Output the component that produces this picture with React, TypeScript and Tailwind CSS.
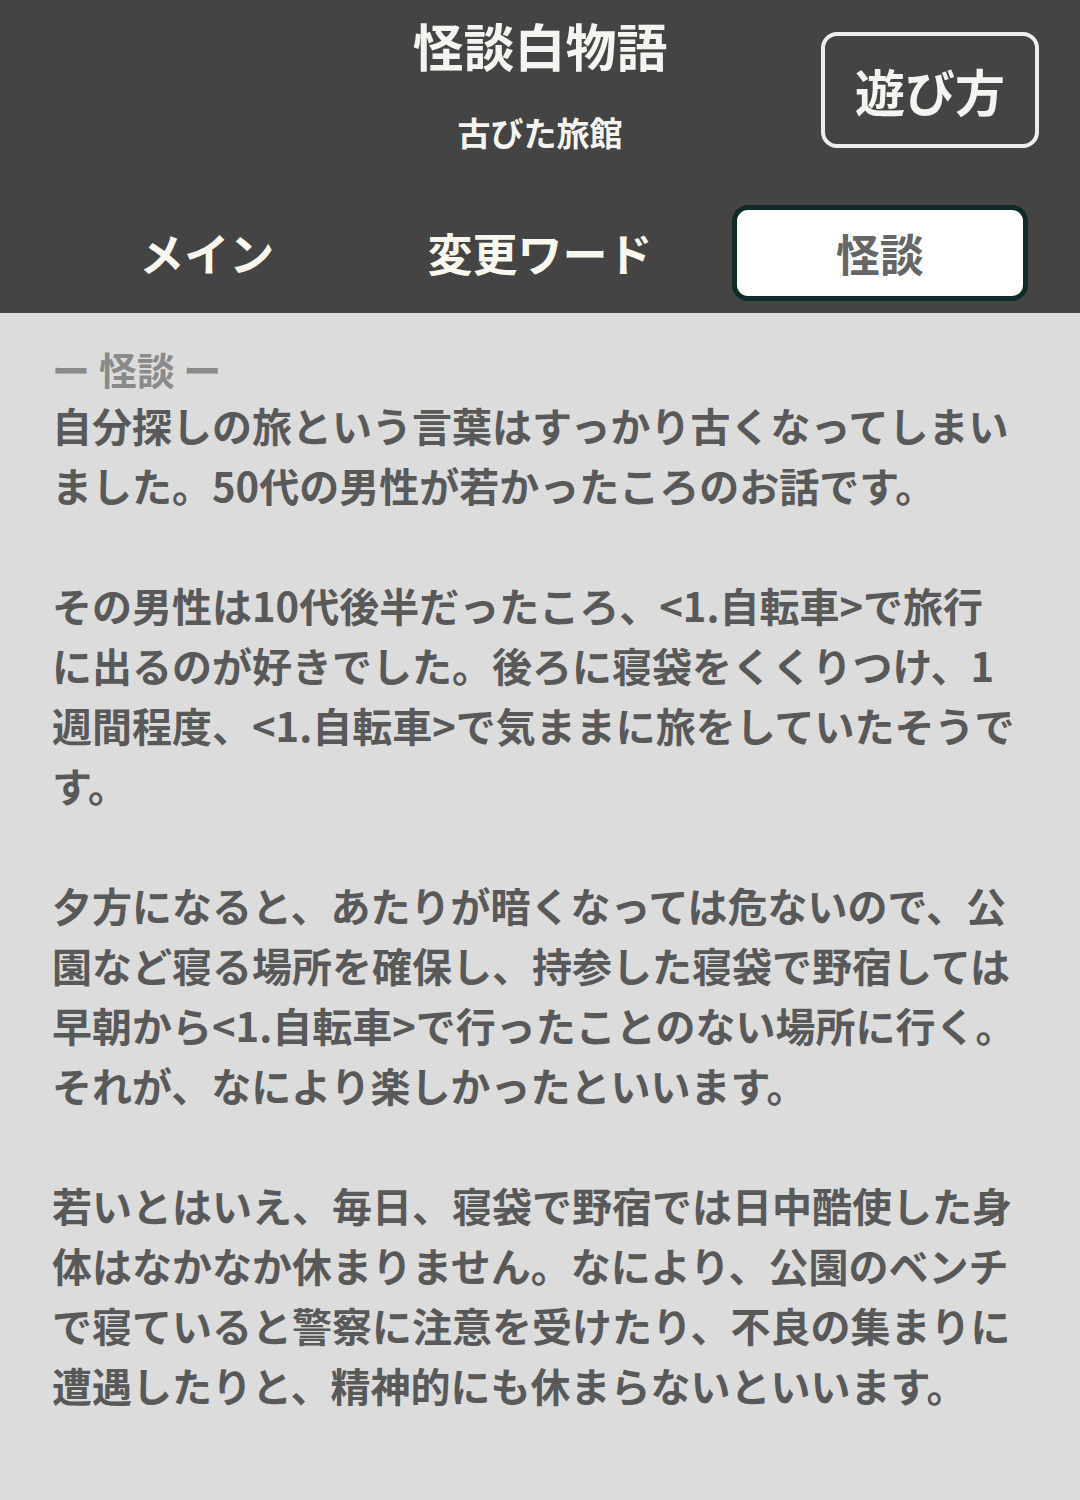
import React from 'react';

const font = { fontFamily: '"Noto Sans CJK JP", "Noto Sans", sans-serif' };

const paragraphs: string[][] = [
  ['自分探しの旅という言葉はすっかり古くなってしまい', 'ました。50代の男性が若かったころのお話です。'],
  [
    'その男性は10代後半だったころ、<1.自転車>で旅行',
    'に出るのが好きでした。後ろに寝袋をくくりつけ、1',
    '週間程度、<1.自転車>で気ままに旅をしていたそうで',
    'す。',
  ],
  [
    '夕方になると、あたりが暗くなっては危ないので、公',
    '園など寝る場所を確保し、持参した寝袋で野宿しては',
    '早朝から<1.自転車>で行ったことのない場所に行く。',
    'それが、なにより楽しかったといいます。',
  ],
  [
    '若いとはいえ、毎日、寝袋で野宿では日中酷使した身',
    '体はなかなか休まりません。なにより、公園のベンチ',
    'で寝ていると警察に注意を受けたり、不良の集まりに',
    '遭遇したりと、精神的にも休まらないといいます。',
  ],
];

const tabs = ['メイン', '変更ワード', '怪談'];

export default function App() {
  const active = 2;
  return (
    <div className="w-[1080px] min-h-[1500px] bg-[#dcdcdc]" style={font}>
      <header className="bg-[#444444] text-[#f4f4f0]">
        <div className="grid grid-cols-[1fr_auto_1fr] items-start h-[203px]">
          <div />
          <div className="flex flex-col items-center pt-[15px]">
            <h1 className="text-[51px] leading-[60px] font-bold">怪談白物語</h1>
            <p className="mt-[37px] text-[33px] leading-[40px] font-bold">古びた旅館</p>
          </div>
          <div className="flex justify-end pr-[41px] pt-[32px]">
            <button className="w-[218px] h-[116px] rounded-[16px] border-[4px] border-[#eeeeee] text-[50px] font-bold leading-none text-[#f4f4f0]">
              遊び方
            </button>
          </div>
        </div>
        <nav className="grid grid-cols-3 pl-[40px] pr-[40px] pt-[2px] pb-[12px]">
          {tabs.map((t, i) =>
            i === active ? (
              <div key={t} className="pl-[25px] pr-[12px]">
                <div className="h-[96px] rounded-[16px] border-[5px] border-[#0f2b29] bg-white flex items-center justify-center text-[44px] font-bold text-[#666666]">
                  {t}
                </div>
              </div>
            ) : (
              <div key={t} className="h-[96px] flex items-center justify-center text-[45px] font-bold text-[#f8f8ee]">
                {t}
              </div>
            ),
          )}
        </nav>
      </header>
      <main className="pl-[52px] pr-[40px] pt-[30px]">
        <h2 className="text-[38px] leading-[52px] font-bold text-[#8a8a8a]">ー 怪談 ー</h2>
        <div className="text-[40px] leading-[60px] font-bold text-[#595959]">
          {paragraphs.map((p, pi) => (
            <div key={pi} className={pi > 0 ? 'mt-[60px]' : ''}>
              {p.map((line, li) => (
                <div key={li} className="whitespace-nowrap">
                  {line}
                </div>
              ))}
            </div>
          ))}
        </div>
      </main>
    </div>
  );
}
